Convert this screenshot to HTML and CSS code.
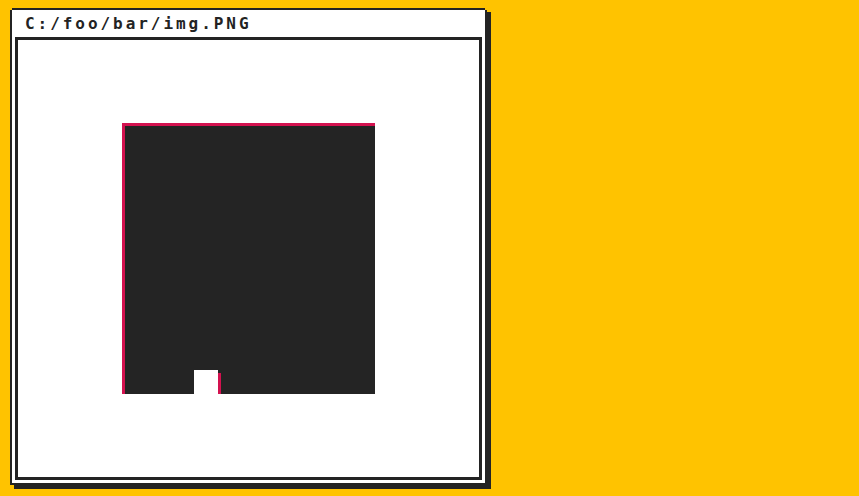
FILE: index.html
```html
<!DOCTYPE html>
<html>
<head>
<meta charset="utf-8">
<link rel="stylesheet" href="styles.css">
</head>
<body>
  <div class="window">
    <div class="title">C:/foo/bar/img.PNG</div>
    <div class="frame">
      <div class="picture">
        <div class="notch"></div>
      </div>
    </div>
  </div>
</body>
</html>
```
FILE: styles.css
```css
html, body {
  margin: 0;
  padding: 0;
}
body {
  background: #ffc300;
  padding: 8px 0 0 10px;
  height: 496px;
  box-sizing: border-box;
  overflow: hidden;
}
.window {
  position: relative;
  width: 477px;
  height: 477px;
  box-sizing: border-box;
  border: 2px solid #232323;
  box-shadow: 4px 4px 0 #232323;
  background: #fff;
  padding: 0 3px 3px 3px;
  display: flex;
  flex-direction: column;
}
.window::before,
.window::after {
  content: "";
  position: absolute;
  width: 2px;
  height: 2px;
  background: #ffc300;
}
.window::before {
  left: -2px;
  top: -2px;
}
.window::after {
  right: -2px;
  top: -2px;
}
.title {
  height: 27px;
  line-height: 28px;
  padding-left: 10px;
  font-family: "DejaVu Sans Mono", "Liberation Mono", monospace;
  font-weight: bold;
  font-size: 16px;
  letter-spacing: 2.95px;
  color: #232323;
  white-space: nowrap;
}
.frame {
  flex: 1;
  border: 3px solid #232323;
  display: flex;
  align-items: center;
  justify-content: center;
}
.picture {
  position: relative;
  width: 253px;
  height: 271px;
  background: #242424;
  box-shadow: inset 3px 3px 0 #d3124f;
  overflow: hidden;
}
.notch {
  position: absolute;
  left: 72px;
  top: 247px;
  width: 24px;
  height: 30px;
  background: #fff;
  box-shadow: 3px 3px 0 #d3124f;
}
```
